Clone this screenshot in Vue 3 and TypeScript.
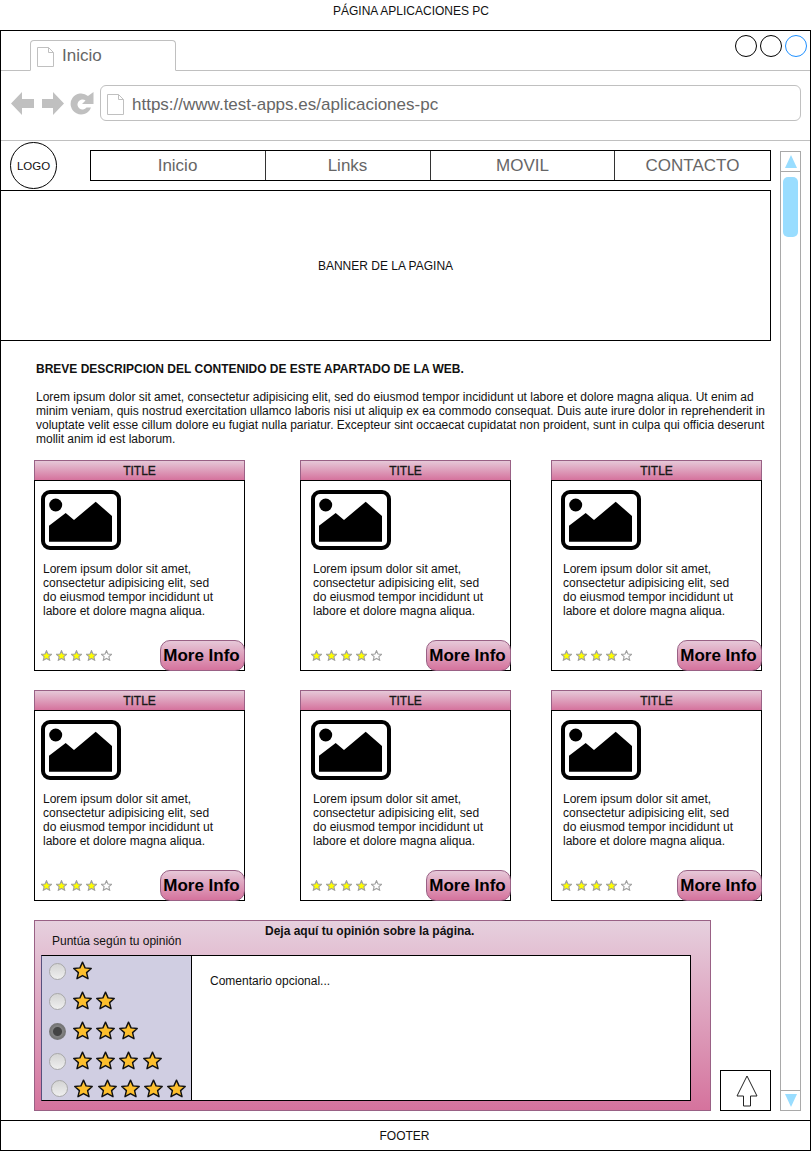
<script setup lang="ts">
const cards = [1, 2, 3, 4, 5, 6]
const smallStars = [true, true, true, true, false]
const ratings = [
  { count: 1, checked: false },
  { count: 2, checked: false },
  { count: 3, checked: true },
  { count: 4, checked: false },
  { count: 5, checked: false },
]
const starPath = 'M10 1.2 L12.7 7.2 L19.2 7.9 L14.3 12.2 L15.8 18.6 L10 15.3 L4.2 18.6 L5.7 12.2 L0.8 7.9 L7.3 7.2 Z'
const lorem = 'Lorem ipsum dolor sit amet, consectetur adipisicing elit, sed do eiusmod tempor incididunt ut labore et dolore magna aliqua. Ut enim ad minim veniam, quis nostrud exercitation ullamco laboris nisi ut aliquip ex ea commodo consequat. Duis aute irure dolor in reprehenderit in voluptate velit esse cillum dolore eu fugiat nulla pariatur. Excepteur sint occaecat cupidatat non proident, sunt in culpa qui officia deserunt mollit anim id est laborum.'
</script>

<template>
  <div class="page">
    <div class="page-title">PÁGINA APLICACIONES PC</div>
    <div class="window">
      <div class="tabbar">
        <div class="tab">
          <svg class="doc" width="17" height="20" viewBox="0 0 17 20">
            <path d="M0.5 0.5 H11.5 L16.5 5.5 V19.5 H0.5 Z M11.5 0.5 V5.5 H16.5" fill="#fff" stroke="#c0c0c0" />
          </svg>
          <span>Inicio</span>
        </div>
        <div class="dots">
          <span class="dot"></span>
          <span class="dot"></span>
          <span class="dot blue"></span>
        </div>
      </div>
      <div class="addressbar">
        <svg class="navicons" width="84" height="26" viewBox="0 0 84 26">
          <path d="M0 12.500 L11 1 V8 H23 V17 H11 V24 Z" fill="#c0c0c0" />
          <path d="M53 12.500 L42 1 V8 H31 V17 H42 V24 Z" fill="#c0c0c0" />
          <path d="M80 16.500 A10.500 10.500 0 1 1 77 5 L82.500 1 V13 H71 L74.500 9.500 A5 5 0 1 0 75.500 16.500 Z" fill="#c0c0c0" />
        </svg>
        <div class="url">
          <svg class="doc" width="17" height="21" viewBox="0 0 17 21">
            <path d="M0.5 0.5 H11.500 L16.500 5.500 V20.500 H0.500 Z M11.500 0.500 V5.500 H16.500" fill="#fff" stroke="#c0c0c0" />
          </svg>
          <span>https://www.test-apps.es/aplicaciones-pc</span>
        </div>
      </div>

      <div class="viewport">
        <div class="content">
          <div class="topnav">
            <div class="logo">LOGO</div>
            <nav class="menu">
              <a class="m1">Inicio</a>
              <a class="m2">Links</a>
              <a class="m3">MOVIL</a>
              <a class="m4">CONTACTO</a>
            </nav>
          </div>
          <div class="banner">BANNER DE LA PAGINA</div>

          <div class="intro">
            <h1>BREVE DESCRIPCION DEL CONTENIDO DE ESTE APARTADO DE LA WEB.</h1>
            <p>{{ lorem }}</p>
          </div>

          <div class="cards">
            <div v-for="c in cards" :key="c" class="card">
              <div class="card-title">TITLE</div>
              <div class="card-body">
                <svg class="pic" width="80" height="60" viewBox="0 0 80 60">
                  <rect x="2" y="2" width="76" height="56" rx="7" fill="#fff" stroke="#000" stroke-width="4" />
                  <circle cx="14.700" cy="15" r="6.500" fill="#000" />
                  <path d="M8 35.700 L24.700 23 L33 30 L54.700 11.700 L71 26 V51.700 H8 Z" fill="#000" />
                </svg>
                <p>Lorem ipsum dolor sit amet, consectetur adipisicing elit, sed do eiusmod tempor incididunt ut labore et dolore magna aliqua.</p>
                <div class="card-foot">
                  <div class="small-stars">
                    <svg v-for="(on, i) in smallStars" :key="i" width="11" height="11" viewBox="0 0 20 20">
                      <path :d="starPath" :fill="on ? '#ffff00' : '#fff'" stroke="#a0a0a0" stroke-width="2" />
                    </svg>
                  </div>
                  <button class="more">More Info</button>
                </div>
              </div>
            </div>
          </div>

          <div class="bottom">
            <div class="opinion">
              <div class="opinion-head">
                <span class="rate-label">Puntúa según tu opinión</span>
                <span class="opinion-title">Deja aquí tu opinión sobre la página.</span>
              </div>
              <div class="opinion-box">
                <div class="rates">
                  <div v-for="r in ratings" :key="r.count" class="rate">
                    <span class="radio" :class="{ checked: r.checked }"></span>
                    <svg v-for="n in r.count" :key="n" width="19" height="19" viewBox="0 0 20 20">
                      <path :d="starPath" fill="#fdbf2d" stroke="#111" stroke-width="1.500" stroke-linejoin="round" />
                    </svg>
                  </div>
                </div>
                <div class="comment">Comentario opcional...</div>
              </div>
            </div>
            <div class="up">
              <svg width="22" height="32" viewBox="0 0 22 32">
                <path d="M11 1 L21 21 H14.500 V31 H7.500 V21 H1 Z" fill="#fff" stroke="#222" stroke-width="1" />
              </svg>
            </div>
          </div>
        </div>

        <div class="scrollbar">
          <div class="sb-btn top"><span class="tri up-tri"></span></div>
          <div class="sb-track"><div class="sb-thumb"></div></div>
          <div class="sb-btn bot"><span class="tri down-tri"></span></div>
        </div>
      </div>

      <div class="footer">FOOTER</div>
    </div>
  </div>
</template>

<style scoped>
.page {
  width: 811px;
  height: 1151px;
  font-family: "Liberation Sans", Arial, sans-serif;
  font-size: 12px;
  color: #111;
  background: #fff;
  overflow: hidden;
}
.page-title {
  height: 30px;
  padding-top: 4px;
  box-sizing: border-box;
  line-height: 14px;
  text-align: center;
  padding-left: 11px;
}
.window {
  width: 811px;
  height: 1121px;
  box-sizing: border-box;
  border: 1px solid #000;
  display: flex;
  flex-direction: column;
}
.tabbar {
  height: 40px;
  box-sizing: border-box;
  border-bottom: 1px solid #c0c0c0;
  display: flex;
  justify-content: space-between;
  padding: 9px 3px 0 29px;
}
.tab {
  width: 146px;
  height: 31px;
  box-sizing: border-box;
  border: 1px solid #c0c0c0;
  border-bottom: 1px solid #fff;
  border-radius: 4px 4px 0 0;
  display: flex;
  align-items: flex-start;
  gap: 8px;
  padding: 6px 0 0 6px;
  font-size: 17px;
  line-height: 19px;
  color: #666;
}
.tab span {
  margin-top: -1px;
}
.dots {
  display: flex;
  gap: 3px;
  margin-top: -5px;
}
.dot {
  width: 22px;
  height: 22px;
  box-sizing: border-box;
  border: 1px solid #000;
  border-radius: 50%;
}
.dot.blue {
  border-color: #1e90ff;
}
.addressbar {
  height: 70px;
  box-sizing: border-box;
  border-bottom: 1px solid #c0c0c0;
  display: flex;
  align-items: flex-start;
  padding: 14px 9px 0 10px;
}
.navicons {
  margin-top: 6px;
  margin-right: 5px;
  flex: none;
}
.url {
  flex: 1;
  height: 36px;
  box-sizing: border-box;
  border: 1px solid #c0c0c0;
  border-radius: 6px;
  display: flex;
  align-items: center;
  gap: 8px;
  padding-left: 6px;
  font-size: 17px;
  color: #666;
}
.url .doc {
  margin-top: 2px;
}
.url span {
  margin-top: 4px;
}
.viewport {
  flex: 1;
  display: flex;
  min-height: 0;
}
.content {
  width: 779px;
  flex: none;
  display: flex;
  flex-direction: column;
}
.topnav {
  height: 49px;
  display: flex;
  align-items: flex-start;
  padding-left: 9px;
}
.logo {
  width: 47px;
  height: 47px;
  margin-top: 1px;
  box-sizing: border-box;
  border: 1px solid #000;
  border-radius: 50%;
  display: flex;
  align-items: center;
  justify-content: center;
  font-size: 11.500px;
  flex: none;
}
.menu {
  margin-left: 33px;
  margin-top: 9px;
  width: 681px;
  height: 31px;
  box-sizing: border-box;
  border: 1px solid #000;
  display: flex;
  font-size: 17px;
  color: #666;
}
.menu a {
  display: flex;
  align-items: center;
  justify-content: center;
  box-sizing: border-box;
  border-right: 1px solid #333;
}
.m1 { width: 175px; padding-right: 1px; }
.m2 { width: 165px; padding-right: 1px; }
.m3 { width: 184px; }
.m4 { flex: 1; border-right: none !important; }
.banner {
  width: 771px;
  height: 151px;
  box-sizing: border-box;
  margin-left: -1px;
  border: 1px solid #000;
  display: flex;
  align-items: center;
  justify-content: center;
}
.intro {
  padding: 21px 6px 0 35px;
}
.intro h1 {
  margin: 0;
  font-size: 12px;
  line-height: 14px;
  font-weight: bold;
}
.intro p {
  margin: 14px 0 0;
  line-height: 14px;
}
.cards {
  margin-top: 14px;
  margin-left: 33px;
  display: grid;
  grid-template-columns: 266px 251px 211px;
  row-gap: 19px;
}
.card {
  width: 211px;
  height: 211px;
  display: flex;
  flex-direction: column;
}
.card-title {
  height: 20px;
  flex: none;
  box-sizing: border-box;
  border: 1px solid #996185;
  border-bottom: none;
  background: linear-gradient(#e6c8d8, #d5739d);
  text-align: center;
  font-size: 12px;
  -webkit-text-stroke: 0.3px #222;
  line-height: 21px;
}
.card-body {
  flex: 1;
  border: 1px solid #000;
  box-sizing: border-box;
  padding: 9px 6px 0 6px;
  display: flex;
  flex-direction: column;
}
.card:nth-child(3n + 2) .card-body {
  padding-left: 10px;
}
.card:nth-child(3n) .card-body {
  padding-left: 9px;
}
.pic {
  display: block;
}
.card-body p {
  margin: 12px 18px 0 2px;
  line-height: 14px;
}
.card-foot {
  margin-top: auto;
  margin-right: -7px;
  margin-bottom: -1px;
  display: flex;
  justify-content: space-between;
  align-items: center;
}
.small-stars {
  display: flex;
  gap: 4px;
}
.small-stars svg {
  display: block;
}
.more {
  width: 85px;
  height: 31px;
  padding: 0 2px 0 0;
  box-sizing: border-box;
  border: 1px solid #996185;
  border-radius: 10px;
  background: linear-gradient(#e6c8d8, #d5739d);
  font-family: inherit;
  font-size: 17px;
  font-weight: bold;
  color: #000;
}
.bottom {
  margin-top: 19px;
  margin-left: 33px;
  display: flex;
  align-items: flex-end;
  gap: 9px;
}
.opinion {
  width: 677px;
  height: 191px;
  box-sizing: border-box;
  border: 1px solid #996185;
  background: linear-gradient(#e6d0de, #d5739d);
  padding: 0 19px 0 6px;
  display: flex;
  flex-direction: column;
}
.opinion-head {
  height: 34px;
  position: relative;
}
.rate-label {
  position: absolute;
  left: 11px;
  top: 12px;
  line-height: 16px;
}
.opinion-title {
  position: absolute;
  left: 224px;
  top: 3px;
  font-weight: bold;
  line-height: 15px;
}
.opinion-box {
  height: 146px;
  box-sizing: border-box;
  border: 1px solid #000;
  border-left-color: #56517e;
  background: #fff;
  display: flex;
}
.rates {
  width: 150px;
  flex: none;
  box-sizing: border-box;
  background: #d0cee2;
  border-right: 1px solid #000;
  padding: 0 0 0 7px;
}
.rate {
  height: 30px;
  display: flex;
  align-items: center;
  gap: 4.300px;
}
.rate svg {
  margin-bottom: 2px;
}
.rate:last-child {
  margin-top: -3px;
  padding-left: 1.500px;
}
.rate:last-child svg {
  margin-bottom: 0;
}
.radio {
  width: 17px;
  height: 17px;
  margin-right: 2.500px;
  box-sizing: border-box;
  border: 1px solid #a8a8a8;
  border-radius: 50%;
  background: linear-gradient(#d4d4d4, #efefef);
  flex: none;
}
.radio.checked {
  border: 2px solid #777;
  background: radial-gradient(circle, #444 0 4px, #808080 5px);
}
.comment {
  padding: 18px 0 0 18px;
  line-height: 15px;
}
.up {
  width: 51px;
  height: 41px;
  box-sizing: border-box;
  border: 1px solid #000;
  display: flex;
  align-items: center;
  justify-content: center;
  padding-left: 2px;
}
.scrollbar {
  width: 21px;
  height: 960px;
  margin-top: 10px;
  box-sizing: border-box;
  border: 1px solid #a9a9a9;
  display: flex;
  flex-direction: column;
}
.sb-btn {
  height: 19px;
  flex: none;
  display: flex;
  align-items: center;
  justify-content: center;
}
.sb-btn.top { border-bottom: 1px solid #a9a9a9; }
.sb-btn.bot { border-top: 1px solid #a9a9a9; }
.tri {
  width: 0;
  height: 0;
  border-left: 6px solid transparent;
  border-right: 6px solid transparent;
}
.up-tri { border-bottom: 13px solid #99ddff; }
.down-tri { border-top: 13px solid #99ddff; }
.sb-track {
  flex: 1;
  padding: 5px 2px;
}
.sb-thumb {
  height: 60px;
  background: #99ddff;
  border-radius: 5px;
}
.footer {
  height: 30px;
  margin-top: auto;
  box-sizing: border-box;
  border-top: 1px solid #000;
  text-align: center;
  line-height: 31px;
  padding-right: 2px;
}
</style>
